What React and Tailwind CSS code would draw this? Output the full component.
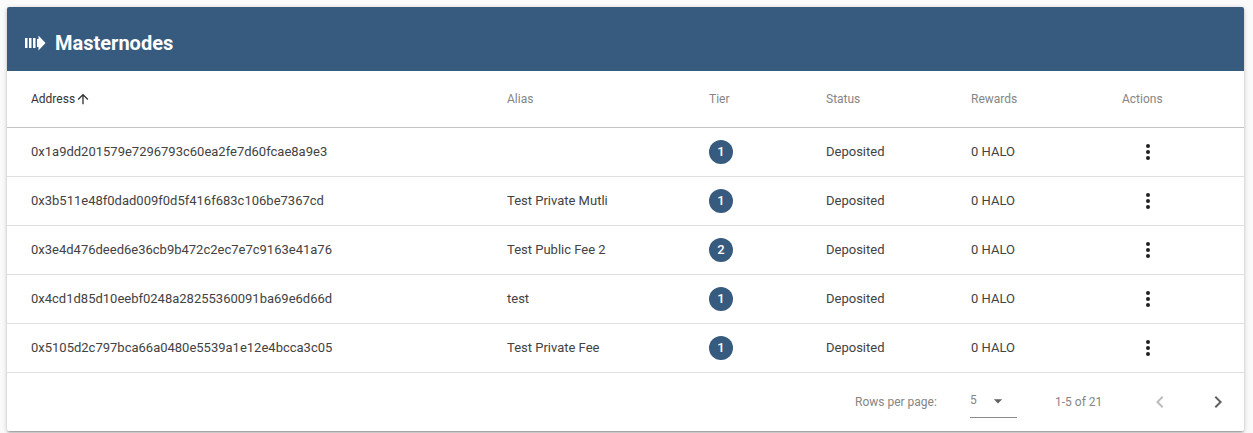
const rows = [
  { address: "0x1a9dd201579e7296793c60ea2fe7d60fcae8a9e3", alias: "", tier: 1 },
  { address: "0x3b511e48f0dad009f0d5f416f683c106be7367cd", alias: "Test Private Mutli", tier: 1 },
  { address: "0x3e4d476deed6e36cb9b472c2ec7e7c9163e41a76", alias: "Test Public Fee 2", tier: 2 },
  { address: "0x4cd1d85d10eebf0248a28255360091ba69e6d66d", alias: "test", tier: 1 },
  { address: "0x5105d2c797bca66a0480e5539a1e12e4bcca3c05", alias: "Test Private Fee", tier: 1 },
];

function NodesIcon() {
  return (
    <svg width="21" height="16" viewBox="0 0 21 16" fill="#fff" className="shrink-0">
      <path d="M0 3h2.500v10H0zM4 3h2.500v10H4zM8 3h2.500v10H8zM12 4h1.500V0.500L20.500 8 13.500 15.500V12H12z" />
    </svg>
  );
}

function MoreIcon() {
  return (
    <svg width="24" height="24" viewBox="0 0 24 24" fill="#212121">
      <circle cx="12" cy="6" r="2" />
      <circle cx="12" cy="12" r="2" />
      <circle cx="12" cy="18" r="2" />
    </svg>
  );
}

export default function App() {
  return (
    <div className="min-h-screen bg-[#fafafa] p-[7px] pb-0 font-['Roboto',sans-serif]">
      <div className="w-[1237px] rounded-[2px] bg-white shadow-[0_1px_5px_rgba(0,0,0,0.2),0_2px_2px_rgba(0,0,0,0.14),0_3px_1px_-2px_rgba(0,0,0,0.12)]">
        <div className="flex h-[64px] items-center gap-[9px] rounded-t-[2px] bg-[#375a7f] pl-[18px] pt-2 text-white">
          <NodesIcon />
          <h1 className="text-[20px] font-bold">Masternodes</h1>
        </div>

        <table className="w-full table-fixed border-collapse text-[13px]">
          <colgroup>
            <col className="w-[500px]" />
            <col className="w-[202px]" />
            <col className="w-[117px]" />
            <col className="w-[145px]" />
            <col className="w-[151px]" />
            <col />
          </colgroup>
          <thead>
            <tr className="h-[56px] border-b border-[#c4c4c4] text-left text-[12px] text-[#858585]">
              <th className="pl-6 font-normal text-[#333333]">
                <span className="inline-flex items-center">
                  Address
                  <svg width="16" height="16" viewBox="0 0 24 24" fill="#333333">
                    <path d="M4 12l1.410 1.410L11 7.830V20h2V7.830l5.580 5.590L20 12l-8-8-8 8z" />
                  </svg>
                </span>
              </th>
              <th className="font-normal">Alias</th>
              <th className="font-normal">Tier</th>
              <th className="font-normal">Status</th>
              <th className="font-normal">Rewards</th>
              <th className="font-normal">Actions</th>
            </tr>
          </thead>
          <tbody className="text-[#424242]">
            {rows.map((r) => (
              <tr key={r.address} className="h-[49px] border-b border-[#e0e0e0]">
                <td className="pl-6">{r.address}</td>
                <td>{r.alias}</td>
                <td>
                  <span className="flex h-6 w-6 items-center justify-center rounded-full bg-[#375a7f] text-[13px] font-medium text-white">
                    {r.tier}
                  </span>
                </td>
                <td>Deposited</td>
                <td>0 HALO</td>
                <td className="pl-[14px]">
                  <MoreIcon />
                </td>
              </tr>
            ))}
          </tbody>
        </table>

        <div className="flex h-[58px] items-center pt-px text-[12px] text-[#858585]">
          <span className="ml-[848px] w-[115px]">Rows per page:</span>
          <div className="flex h-[32px] w-[47px] items-start justify-between border-b border-[#8a8a8a]">
            <span className="pt-[5px]">5</span>
            <svg width="20" height="20" viewBox="0 0 24 24" fill="#616161" className="mr-[9px] mt-[5px]">
              <path d="M7 10l5 5 5-5z" />
            </svg>
          </div>
          <span className="ml-[38px] w-[93px]">1-5 of 21</span>
          <svg width="24" height="24" viewBox="0 0 24 24" fill="#bdbdbd">
            <path d="M15.410 7.410L14 6l-6 6 6 6 1.410-1.410L10.830 12z" />
          </svg>
          <svg width="24" height="24" viewBox="0 0 24 24" fill="#616161" className="ml-[34px]">
            <path d="M10 6L8.590 7.410 13.170 12l-4.580 4.590L10 18l6-6z" />
          </svg>
        </div>
      </div>
    </div>
  );
}
